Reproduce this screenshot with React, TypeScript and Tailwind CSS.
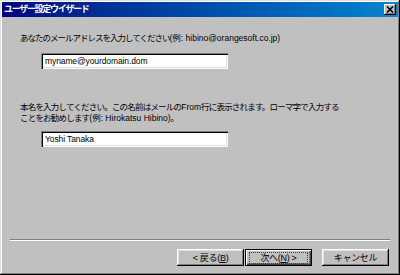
import React from "react";

const font = { fontFamily: '"Liberation Sans", "Noto Sans CJK JP", sans-serif' };

function Btn({ children, def }: { children: React.ReactNode; def?: boolean }) {
  return (
    <div
      className={
        "flex h-[17px] w-[67px] items-center justify-center bg-[#c0c0c0] text-[9px] tracking-[-0.3px] text-black " +
        (def
          ? "shadow-[inset_1px_1px_#000,inset_-1px_-1px_#000,inset_2px_2px_#fff,inset_-2px_-2px_#404040,inset_-3px_-3px_#808080]"
          : "shadow-[inset_-1px_-1px_#000,inset_1px_1px_#fff,inset_-2px_-2px_#808080,inset_2px_2px_#dfdfdf]")
      }
    >
      {def ? (
        <span className="border border-dotted border-[#404040] px-[10px] leading-[10px]">{children}</span>
      ) : (
        <span className="leading-[10px]">{children}</span>
      )}
    </div>
  );
}

function Field({ value }: { value: string }) {
  return (
    <div className="ml-[21px] flex h-[16px] w-[187px] items-center bg-white pl-[4px] text-[8.5px] tracking-[-0.1px] text-black shadow-[inset_1px_1px_#808080,inset_2px_2px_#000,inset_-1px_-1px_#fff,inset_-2px_-2px_#dfdfdf]">
      {value}
    </div>
  );
}

export default function App() {
  return (
    <div
      className="flex h-[275px] w-[400px] flex-col bg-[#c0c0c0] p-[2px] shadow-[inset_-1px_-1px_#000,inset_1px_1px_#dfdfdf,inset_-2px_-2px_#808080,inset_2px_2px_#fff]"
      style={font}
    >
      <div className="flex h-[15px] items-center justify-between bg-gradient-to-r from-[#000080] to-[#1084d0] pl-[2px] pr-[2px]">
        <span className="text-[9px] font-bold tracking-[-1.3px] text-white">ユーザー設定ウイザード</span>
        <div className="flex h-[11px] w-[12px] items-center justify-center bg-[#c0c0c0] shadow-[inset_-1px_-1px_#000,inset_1px_1px_#fff,inset_-2px_-2px_#808080]">
          <svg width="8" height="7" viewBox="0 0 8 7">
            <path d="M1 0.5 L7 6.5 M7 0.5 L1 6.5" stroke="#000" strokeWidth="1.6" />
          </svg>
        </div>
      </div>

      <div className="flex flex-1 flex-col pl-[18px]">
        <div className="mt-[16px] whitespace-pre text-[8.5px] leading-[10px] text-black">
          <span className="tracking-[-1px]">あなたのメールアドレスを入力してください</span>
          <span>{"(例: hibino@orangesoft.co.jp)"}</span>
        </div>
        <div className="mt-[10px]">
          <Field value="myname@yourdomain.dom" />
        </div>
        <div className="mt-[33px] whitespace-pre text-[8.5px] leading-[11px] text-black">
          <span className="tracking-[-0.8px]">本名を入力してください。この名前はメールの</span>
          <span>From</span>
          <span className="tracking-[-0.8px]">行に表示されます。ローマ字で入力する</span>
          <br />
          <span className="tracking-[-0.8px]">ことをお勧めします</span>
          <span>{"(例: Hirokatsu Hibino)"}</span>
          <span className="tracking-[-0.8px]">。</span>
        </div>
        <div className="mt-[7px]">
          <Field value="Yoshi Tanaka" />
        </div>
      </div>

      <div className="mx-[8px] h-[2px] shadow-[inset_0_1px_#808080,inset_0_-1px_#fff]" />
      <div className="mb-[7px] mt-[8px] flex justify-end pr-[9px]">
        <Btn>
          &lt; 戻る(<span className="underline">B</span>)
        </Btn>
        <div className="ml-[1px]">
          <Btn def>
            次へ(<span className="underline">N</span>) &gt;
          </Btn>
        </div>
        <div className="ml-[10px]">
          <Btn>キャンセル</Btn>
        </div>
      </div>
    </div>
  );
}
